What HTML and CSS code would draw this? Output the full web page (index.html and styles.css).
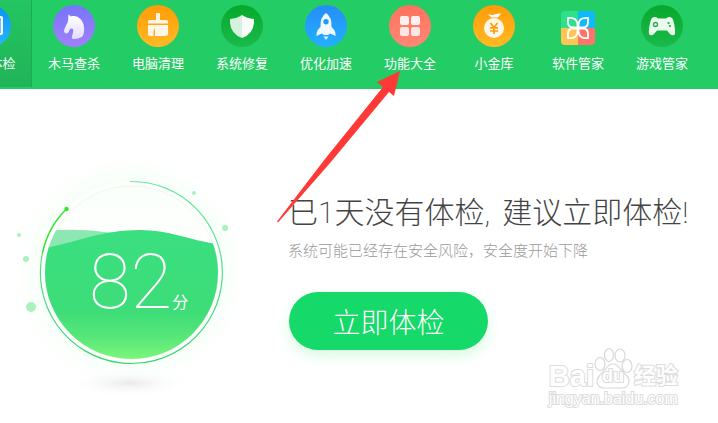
FILE: index.html
```html
<!DOCTYPE html>
<html lang="zh-CN">
<head>
  <meta charset="UTF-8">
  <meta name="viewport" content="width=device-width, initial-scale=1.0">
  <title>电脑体检</title>
  <link rel="stylesheet" href="styles.css">
</head>
<body>
  <header>
    <nav class="toolbar">
      <a class="tool active" href="#">
        <svg class="icon" viewBox="0 0 42 42">
          <defs><linearGradient id="cyan" x2="0" y2="1"><stop stop-color="#0a93ee"/><stop offset="1" stop-color="#28b6fb"/></linearGradient></defs>
          <circle cx="21" cy="21" r="21" fill="url(#cyan)"/>
          <rect x="10" y="12" width="23" height="17" rx="1" fill="#5cc8fb" stroke="#fff" stroke-width="2"/>
        </svg>
        <span>电脑体检</span>
      </a>
      <a class="tool" href="#">
        <svg class="icon" viewBox="0 0 42 42">
          <defs><linearGradient id="purple" x2="0" y2="1"><stop stop-color="#7574fa"/><stop offset="1" stop-color="#a181fb"/></linearGradient><linearGradient id="pale" x2="0" y2="1"><stop stop-color="#fff"/><stop offset="1" stop-color="#e3dcff"/></linearGradient></defs>
          <circle cx="21" cy="21" r="21" fill="url(#purple)"/>
          <path d="M15.500 9.500L18 11.500C23 10 28 13 30 18C32 23 31 28 30 31C27 34 20 34.500 19 33.500C18.500 30 21 28 20 24L17.500 23.500L15 28C13.500 29 11 28 11 26C12 21 14 20 15 16C15.500 14 15 12 15.500 9.500Z" fill="url(#pale)"/>
        </svg>
        <span>木马查杀</span>
      </a>
      <a class="tool" href="#">
        <svg class="icon" viewBox="0 0 42 42">
          <defs><linearGradient id="orange" x2="0" y2="1"><stop stop-color="#ff9c08"/><stop offset="1" stop-color="#ffba25"/></linearGradient></defs>
          <circle cx="21" cy="21" r="21" fill="url(#orange)"/>
          <path d="M19 9Q19 8 20 8H22Q23 8 23 9V15H29Q31 15 31 17V18.500H11V17Q11 15 13 15H19ZM11 20H31V29Q31 31 29 31H18V23L16.500 26V31H13Q11 31 11 29Z" fill="#fff5e6"/>
        </svg>
        <span>电脑清理</span>
      </a>
      <a class="tool" href="#">
        <svg class="icon" viewBox="0 0 42 42">
          <defs><linearGradient id="green" x2="0" y2="1"><stop stop-color="#06a92b"/><stop offset="1" stop-color="#1aba4c"/></linearGradient></defs>
          <circle cx="21" cy="21" r="21" fill="url(#green)"/>
          <path d="M21 10Q16 13.500 9 14V18Q10 29 21 33Z" fill="#d5f3dc"/>
          <path d="M21 10Q26 13.500 33 14V18Q32 29 21 33Z" fill="#fafcfa"/>
        </svg>
        <span>系统修复</span>
      </a>
      <a class="tool" href="#">
        <svg class="icon" viewBox="0 0 42 42">
          <defs><linearGradient id="blue" x2="0" y2="1"><stop stop-color="#268df9"/><stop offset="1" stop-color="#22b0ff"/></linearGradient></defs>
          <circle cx="21" cy="21" r="21" fill="url(#blue)"/>
          <path fill-rule="evenodd" d="M21 8Q27 12 26.500 22C29 24 31 27 30.500 31L25 28.500L23 30H19L17 28.500L11.500 31C11 27 13 24 15.500 22Q15 12 21 8ZM21 14A2.700 2.700 0 1 0 21 19.400A2.700 2.700 0 1 0 21 14Z" fill="#f0f9ff"/>
          <path d="M18.500 31.500H23.500L21 35Z" fill="#e4f6ff"/>
        </svg>
        <span>优化加速</span>
      </a>
      <a class="tool" href="#">
        <svg class="icon" viewBox="0 0 42 42">
          <defs><linearGradient id="coral" x2="0" y2="1"><stop stop-color="#ff725d"/><stop offset="1" stop-color="#ff8875"/></linearGradient></defs>
          <circle cx="21" cy="21" r="21" fill="url(#coral)"/>
          <g fill="#fff1ef"><rect x="11" y="11" width="9" height="9" rx="2"/><rect x="22" y="11" width="9" height="9" rx="2"/><rect x="11" y="22" width="9" height="9" rx="2" opacity=".9"/><rect x="22" y="22" width="9" height="9" rx="2" opacity=".9"/></g>
        </svg>
        <span>功能大全</span>
      </a>
      <a class="tool" href="#">
        <svg class="icon" viewBox="0 0 42 42">
          <circle cx="21" cy="21" r="21" fill="url(#orange)"/>
          <path d="M15 9.500Q18 9.500 20 10Q24 8 28 8.500L25 12.500H18.500Z" fill="#fff"/>
          <circle cx="21" cy="23" r="10" fill="#fff6e8"/>
          <path d="M17.500 18L21 22.500L24.500 18M17 22.800H25M17 26H25M21 22.500V29" fill="none" stroke="#ff9d0a" stroke-width="1.700"/>
        </svg>
        <span>小金库</span>
      </a>
      <a class="tool" href="#">
        <svg class="icon" viewBox="0 0 42 42">
          <defs><clipPath id="tile"><rect x="4" y="6" width="34" height="34" rx="4"/></clipPath></defs>
          <g clip-path="url(#tile)">
            <path d="M4 6H21V23H4Z" fill="#2fe08b"/>
            <path d="M21 6H38V23H21Z" fill="#12b9fa"/>
            <path d="M4 23H21V40H4Z" fill="#ffc552"/>
            <path d="M21 23H38V40H21Z" fill="#ff7569"/>
          </g>
          <path d="M20.500 22.500H16Q11 22.500 11 17V13Q20.500 12 20.500 20ZM21.500 22.500H26Q31 22.500 31 17V13Q21.500 12 21.500 20ZM20.500 23.500H16Q11 23.500 11 29V33Q20.500 34 20.500 26ZM21.500 23.500H26Q31 23.500 31 29V33Q21.500 34 21.500 26Z" fill="none" stroke="#fff" stroke-width="1.800"/>
        </svg>
        <span>软件管家</span>
      </a>
      <a class="tool" href="#">
        <svg class="icon" viewBox="0 0 42 42">
          <circle cx="21" cy="21" r="21" fill="url(#green)"/>
          <path d="M11 13Q14 11 17 13.500H25Q28 11 31 13C33 15 34.500 25 34 29Q32 31.500 29 29L26 25.500H16L13 29Q10 31.500 8 29C7.500 25 9 15 11 13Z" fill="#eafaec"/>
          <circle cx="14.500" cy="19.500" r="2" fill="none" stroke="#22a947" stroke-width="1.300"/>
          <circle cx="27.500" cy="18" r="1.100" fill="#22a947"/><circle cx="29" cy="21" r="1.100" fill="#22a947"/>
        </svg>
        <span>游戏管家</span>
      </a>
    </nav>
  </header>
  <main>
    <div class="gauge">
      <svg class="dial" viewBox="0 0 262 262">
        <defs>
          <linearGradient id="liquid" x2="0" y2="1"><stop stop-color="#3adf80"/><stop offset=".6" stop-color="#3ddd78"/><stop offset=".8" stop-color="#59e779"/><stop offset="1" stop-color="#84fa7b"/></linearGradient>
          <linearGradient id="ring" x2="0" y2="1"><stop stop-color="#6de7a2"/><stop offset="1" stop-color="#37d46e"/></linearGradient>
          <linearGradient id="glass" x2="0" y2="1"><stop stop-color="#fafffa"/><stop offset=".4" stop-color="#fff"/></linearGradient>
          <radialGradient id="glow"><stop offset=".7" stop-color="#e6ffea"/><stop offset="1" stop-color="#fff" stop-opacity="0"/></radialGradient>
          <radialGradient id="shadow"><stop stop-color="#e9ebea"/><stop offset="1" stop-color="#fff" stop-opacity="0"/></radialGradient>
          <clipPath id="bowl"><circle cx="131.500" cy="132.500" r="86.500"/></clipPath>
        </defs>
        <circle cx="131" cy="132" r="124" fill="url(#glow)" opacity=".45"/>
        <circle cx="131.500" cy="132.500" r="91" fill="#fff"/>
        <circle cx="131.500" cy="132.500" r="86.500" fill="url(#glass)" stroke="#ebfaeb"/>
        <g clip-path="url(#bowl)">
          <path d="M40 92Q75 87 112 93L116 110L40 115Z" fill="#8de7b3"/>
          <path d="M40 109C75 103 100 90 140 90C170 90 192 101 222 105V225H40Z" fill="url(#liquid)"/>
        </g>
        <path d="M130 41.500A91 91 0 1 1 42.500 113" fill="none" stroke="url(#ring)" stroke-width="1.200"/>
        <path d="M42.500 113Q48 87 66.500 69" fill="none" stroke="#35e52b" stroke-width="1.500"/>
        <circle cx="66.500" cy="69" r="2.200" fill="#35e52b"/>
        <g fill="#a9f1bd"><circle cx="19" cy="95" r="2"/><circle cx="26" cy="119" r="3"/><circle cx="31" cy="167" r="5"/><circle cx="194" cy="53" r="2"/><circle cx="225" cy="88" r="3"/></g>
        <ellipse cx="129" cy="243" rx="64" ry="14" fill="url(#shadow)"/>
      </svg>
      <div class="score"><strong>82</strong><span>分</span></div>
    </div>
    <section class="summary">
      <h1><span>已1天没有体检,</span> <span>建议立即体检!</span></h1>
      <p>系统可能已经存在安全风险，安全度开始下降</p>
      <button type="button">立即体检</button>
    </section>
  </main>
  <svg class="pointer" viewBox="0 0 124 152">
    <path d="M0 150.500L48 88L106 16L100 11L123 0L117 25L112 21L53 92L1 151.500Z" fill="#ff3936"/>
  </svg>
  <div class="watermark">
    <div class="brand">
      <span>Bai</span>
      <span class="paw">
        <svg viewBox="0 0 40 44">
          <g fill="#fff" stroke="#d8d8d8" stroke-width="1.200"><ellipse cx="6" cy="18" rx="5" ry="6.500"/><ellipse cx="15" cy="9" rx="4.500" ry="6.500"/><ellipse cx="26" cy="9.500" rx="5" ry="6.500"/><ellipse cx="33" cy="20" rx="5" ry="6.500"/><path d="M19 18C25 18 26 24 31 28C38 33 35 42 28 42H10C2 42 1 33 7 28C12 24 13 18 19 18Z"/></g>
        </svg>
        <b>du</b>
      </span>
      <span class="label">经验</span>
    </div>
    <div class="site">jingyan.baidu.com</div>
  </div>
</body>
</html>
```
FILE: styles.css
```css
body {
  position: relative;
  margin: 0;
  min-height: 100vh;
  overflow: hidden;
  background: #fff;
  color: #444;
  font-family: "Noto Sans CJK SC", sans-serif;
}
header {
  background: #24cc65;
  overflow: hidden;
}
.toolbar {
  display: flex;
  height: 89px;
  margin-left: -52px;
}
.tool {
  flex: 0 0 84px;
  display: flex;
  flex-direction: column;
  align-items: center;
  gap: 6px;
  padding-top: 5px;
  box-sizing: border-box;
  color: #fff;
  font-size: 13px;
  line-height: 20px;
  text-decoration: none;
}
.tool.active {
  height: 87px;
  background: linear-gradient(#24c562, #20b458);
  border-right: 1px solid #1dab50;
}
.icon {
  width: 42px;
  height: 42px;
}

/* Score and message */
main {
  display: flex;
  padding-top: 51px;
}
.gauge {
  position: relative;
  flex: 0 0 262px;
  height: 262px;
}
.dial {
  display: block;
  width: 100%;
}
.score {
  position: absolute;
  top: 98px;
  left: 89px;
  display: flex;
  align-items: baseline;
  color: #fff;
  font-size: 16px;
}
.score strong {
  font-family: Roboto, sans-serif;
  font-size: 76px;
  font-weight: 100;
  line-height: 88px;
}
.summary {
  padding: 51px 0 0 26px;
  white-space: nowrap;
}
h1 {
  display: flex;
  gap: 12px;
  margin: 0;
  color: #444;
  font-family: Roboto, "Noto Sans CJK SC", sans-serif;
  font-size: 30px;
  font-weight: 200;
  line-height: 44px;
}
p {
  margin: 4px 0 31px;
  color: #999;
  font-size: 15px;
  font-weight: 300;
  line-height: 22px;
}
button {
  width: 199px;
  height: 58px;
  margin-left: 1px;
  padding: 0;
  border: 0;
  border-radius: 29px;
  background: #15d969;
  box-shadow: 0 6px 14px rgba(60, 230, 110, 0.2);
  color: #fff;
  font-family: inherit;
  font-size: 28px;
  font-weight: 300;
  line-height: 56px;
  cursor: pointer;
}

/* Overlays */
.pointer {
  position: absolute;
  top: 71px;
  left: 277px;
  width: 124px;
  height: 152px;
}
.watermark {
  position: absolute;
  right: 40px;
  bottom: 15px;
  color: #fff;
  font-family: "Liberation Sans", "Noto Sans CJK SC", sans-serif;
  -webkit-text-stroke: 2px #dcdcdc;
  paint-order: stroke fill;
}
.brand {
  display: flex;
  align-items: flex-end;
  font-size: 29px;
  font-weight: bold;
  line-height: 28px;
}
.paw {
  position: relative;
  width: 40px;
  height: 44px;
}
.paw svg {
  display: block;
  paint-order: normal;
}
.paw b {
  position: absolute;
  bottom: 4px;
  left: 8px;
  font-size: 18px;
  line-height: 20px;
}
.label {
  font-size: 22px;
}
.site {
  font-size: 16px;
  line-height: 18px;
}
```
